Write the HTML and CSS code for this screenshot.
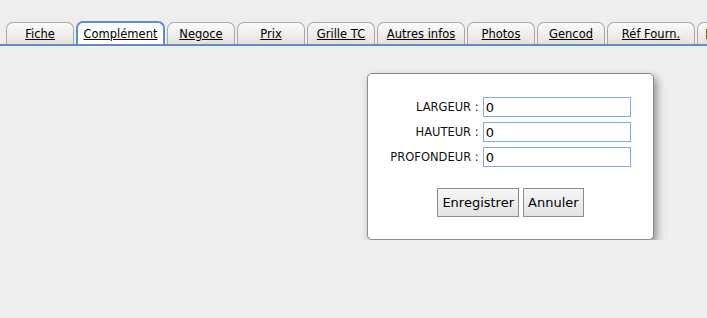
FILE: index.html
```html
<!DOCTYPE html>
<html lang="fr">
<head>
  <meta charset="UTF-8">
  <title>Article - Complément</title>
  <link rel="stylesheet" href="styles.css">
</head>
<body>
  <div class="tabs">
    <a class="tab" href="#">Fiche</a>
    <a class="tab active" href="#">Complément</a>
    <a class="tab" href="#">Negoce</a>
    <a class="tab" href="#">Prix</a>
    <a class="tab" href="#">Grille TC</a>
    <a class="tab wide" href="#">Autres infos</a>
    <a class="tab" href="#">Photos</a>
    <a class="tab" href="#">Gencod</a>
    <a class="tab wide" href="#">Réf Fourn.</a>
    <a class="tab icon-only" href="#" title="Stock"><span class="tab-icon"></span></a>
  </div>

  <div class="dialog">
    <form class="dims">
      <label for="largeur">LARGEUR :</label>
      <input type="text" id="largeur" value="0">
      <label for="hauteur">HAUTEUR :</label>
      <input type="text" id="hauteur" value="0">
      <label for="profondeur">PROFONDEUR :</label>
      <input type="text" id="profondeur" value="0">
    </form>
    <div class="actions">
      <button type="button">Enregistrer</button>
      <button type="button">Annuler</button>
    </div>
  </div>
</body>
</html>
```

FILE: styles.css
```css
body {
  margin: 0;
  background: #eeeeee;
  font-family: "DejaVu Sans", Verdana, sans-serif;
  color: #000;
  overflow: hidden;
}
.tabs {
  display: flex;
  gap: 2px;
  padding: 22px 0 0 6px;
  border-bottom: 2px solid #5b8bd9;
  height: 22px;
  white-space: nowrap;
  overflow: hidden;
}
.tab {
  flex: none;
  box-sizing: border-box;
  width: 68px;
  height: 22px;
  padding: 0 4px;
  display: flex;
  align-items: center;
  justify-content: center;
  font-size: 11.5px;
  color: #000;
  text-decoration: underline;
  border: 1px solid #a9a9a9;
  border-bottom: none;
  border-radius: 7px 7px 0 0;
  background: linear-gradient(#fbfbfa, #e4e2dc);
}
.tab.wide {
  width: 88px;
}
.tab.active {
  width: 89px;
  height: 25px;
  margin-top: -1px;
  margin-bottom: -2px;
  padding: 0 4px 2px;
  border: 2px solid #5b8bd9;
  border-bottom: none;
  background: #fff;
}
.tab.icon-only {
  justify-content: flex-start;
  padding-left: 8px;
}
.tab-icon {
  display: inline-block;
  width: 10px;
  height: 10px;
  background: #f2e64a;
  border-left: 1px solid #6b6a2a;
}
.dialog {
  box-sizing: border-box;
  width: 287px;
  margin: 27px 0 0 367px;
  padding: 23px 0 22px;
  background: #fff;
  border: 1px solid #8a8a8a;
  border-radius: 5px;
  box-shadow: 3px 4px 9px rgba(0, 0, 0, 0.4);
}
.dims {
  display: grid;
  grid-template-columns: auto 148px;
  justify-content: center;
  align-items: center;
  column-gap: 4px;
  row-gap: 5px;
  margin: 0;
}
.dims label {
  text-align: right;
  font-size: 11.5px;
  color: #111;
}
.dims input {
  box-sizing: border-box;
  height: 20px;
  margin: 0;
  padding: 0 2px;
  border: 1px solid #7eaaf0;
  font-family: "DejaVu Sans", Verdana, sans-serif;
  font-size: 13px;
}
.actions {
  display: flex;
  justify-content: center;
  gap: 4px;
  margin-top: 21px;
}
.actions button {
  height: 29px;
  padding: 0 4px;
  border: 1px solid #8d8d8d;
  border-radius: 0;
  background: linear-gradient(#f6f6f6, #e3e3e3);
  font-family: "DejaVu Sans", Verdana, sans-serif;
  font-size: 13px;
  color: #000;
}
```
